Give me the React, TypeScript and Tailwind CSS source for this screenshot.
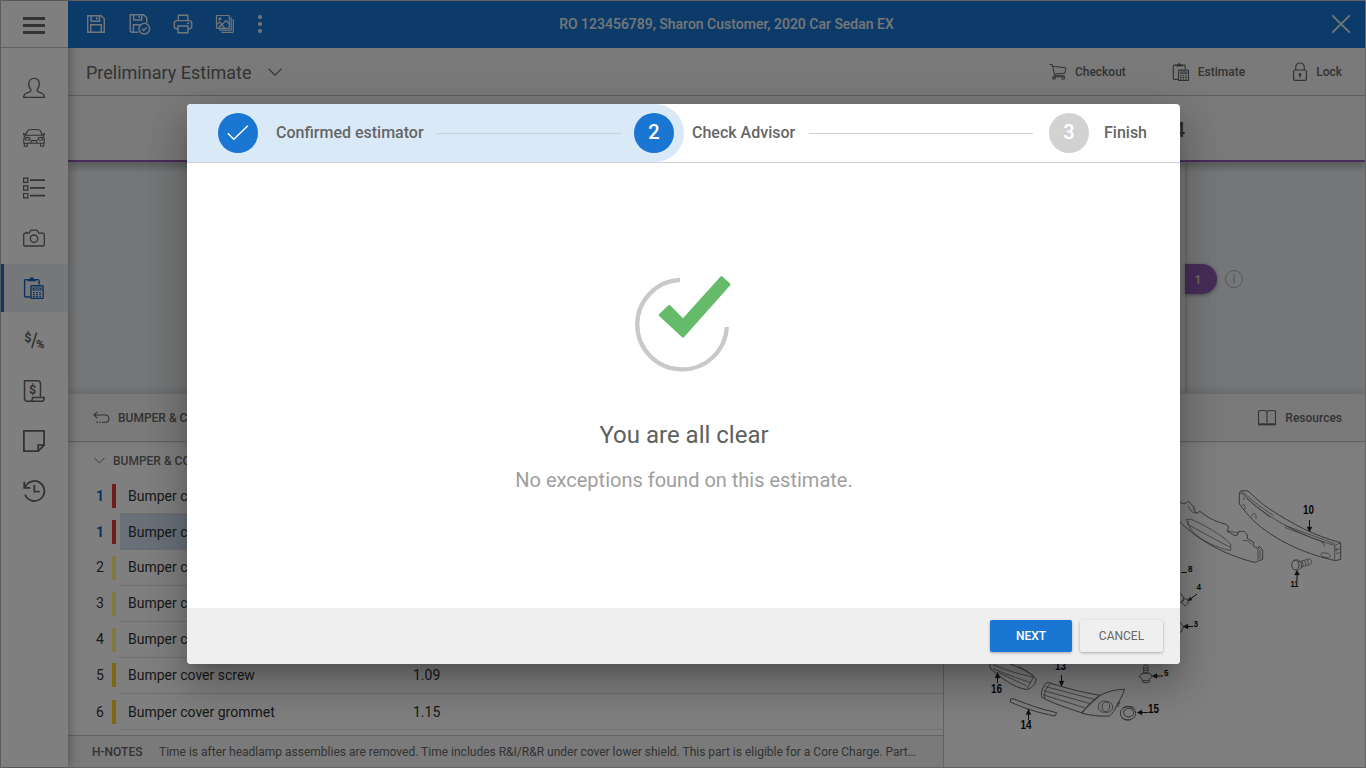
import React from "react";

const navItems = [
  { id: "customer", icon: <UserIcon />, className: "" },
  { id: "vehicle", icon: <CarIcon />, className: "" },
  { id: "lines", icon: <ListIcon />, className: "" },
  { id: "photos", icon: <CameraIcon />, className: "" },
  { id: "estimate", icon: <ClipboardIcon size={22} />, className: "", active: true },
  { id: "rates", icon: <RatesIcon />, className: "mt-[2px]" },
  { id: "invoice", icon: <InvoiceIcon />, className: "mt-px" },
  { id: "notes", icon: <NoteIcon />, className: "" },
  { id: "history", icon: <HistoryIcon />, className: "" },
];

const parts = [
  { num: "1", name: "Bumper cover", bar: "bg-[#e53935]", linked: true },
  { num: "1", name: "Bumper cover", bar: "bg-[#e53935]", linked: true, selected: true },
  { num: "2", name: "Bumper cover", bar: "bg-[#fff08a]", raised: true },
  { num: "3", name: "Bumper cover", bar: "bg-[#fff08a]", raised: true },
  { num: "4", name: "Bumper cover", bar: "bg-[#fff08a]", raised: true },
  { num: "5", name: "Bumper cover screw", bar: "mb-0.5 bg-[#fdd023]", value: "1.09", raised: true },
  { num: "6", name: "Bumper cover grommet", bar: "bg-[#fdd023]", value: "1.15" },
];

function UserIcon() {
  return (
    <svg width="22" height="22" viewBox="0 0 22 22" fill="none" stroke="currentColor" strokeWidth="1.3">
      <path d="M.7 20.3c0-3 .8-3.600 3-4.300 2.800-.9 4.300-1.200 4.300-2.500 0-1-2.300-2.600-2.300-6.500 0-3.600 2-5.600 5.300-5.600s5.300 2 5.300 5.600c0 3.900-2.300 5.500-2.300 6.500 0 1.300 1.500 1.600 4.300 2.500 2.200.7 3 1.300 3 4.300z" />
    </svg>
  );
}

function CarIcon() {
  return (
    <svg width="22" height="18" viewBox="0 0 22 18" fill="none" stroke="currentColor" strokeWidth="1.100">
      <path d="M2.500 6.200 4.700 1.700C5 1.100 5.500.9 6.200.8c3-.3 6.600-.3 9.600 0 .7.1 1.200.3 1.500.9l2.200 4.500M2.500 6.200h17M2.800 5.600.6 4.600v1.300l1.600.7M19.200 5.600l2.200-1v1.300l-1.600.7M2.200 6.600C1.200 7.600.8 9 .8 10.500v3.700h20.400v-3.700c0-1.500-.4-2.900-1.400-3.900M1.300 14.200v3h3v-3M17.700 14.200v3h3v-3M7.500 11.600h7M7.800 13.800l.7-2.200M14.200 13.800l-.7-2.200" />
      <ellipse cx="4.600" cy="9.800" rx="2.300" ry="1.400" />
      <ellipse cx="17.400" cy="9.800" rx="2.300" ry="1.400" />
    </svg>
  );
}

function ListIcon() {
  return (
    <svg width="22" height="22" viewBox="0 0 22 22" fill="none" stroke="currentColor">
      <path d="M.6 1.100h4.300v4.300H.6zM.6 8.800h4.300v4.300H.6zM.6 16.500h4.300v4.300H.6z" strokeWidth="1.200" />
      <path d="M7 3.200h15M7 10.900h15M7 18.600h15" strokeWidth="1.700" />
    </svg>
  );
}

function CameraIcon() {
  return (
    <svg width="22" height="18" viewBox="0 0 22 18" fill="none" stroke="currentColor" strokeWidth="1.300">
      <path d="M2 4.200h4.200l1.200-2.200c.3-.6.7-.9 1.300-.9h4.600c.6 0 1 .3 1.300.9l1.200 2.200H20c.8 0 1.300.5 1.300 1.300v10.200c0 .8-.5 1.300-1.300 1.300H2c-.8 0-1.300-.5-1.300-1.300V5.500c0-.8.5-1.300 1.300-1.300z" />
      <circle cx="11" cy="9.700" r="3.700" />
      <path d="M2.700 3.500h2" />
    </svg>
  );
}

function ClipboardIcon({ size }: { size: number }) {
  return (
    <svg width={size} height={size} viewBox="0 0 22 22" fill="none" stroke="currentColor" strokeWidth="1.400">
      <path d="M7.500 20H2.700C2 20 1.600 19.600 1.600 19V3.600C1.600 3 2 2.600 2.700 2.600H15c.7 0 1.100.4 1.100 1v4" />
      <path d="M4.500 2.200h2.300C7 .8 7.800.2 8.800.2S10.600.8 10.800 2.200h2.300v2H4.500z" fill="currentColor" stroke="none" />
      <path d="M8.800 8.700h10.500c.5 0 .8.3.8.8v11.200c0 .5-.3.800-.8.800H8.800c-.5 0-.8-.3-.8-.8V9.500c0-.5.3-.8.8-.8z" />
      <path d="M10.200 11h7.800v2h-7.800z" strokeWidth="1.200" />
      <path d="M10 15.700h1.800M13.100 15.700h1.800M16.200 15.700H18M10 17.700h1.800M13.100 17.700h1.800M16.200 17.700H18M10 19.700h1.800M13.100 19.700h1.800M16.200 19.700H18" strokeWidth="1.300" />
    </svg>
  );
}

function RatesIcon() {
  return (
    <svg width="22" height="20" viewBox="0 0 22 20" fill="currentColor" stroke="currentColor" strokeWidth=".3">
      <text x="1.500" y="11.500" fontFamily="Roboto, sans-serif" fontSize="12" fontWeight="500">$</text>
      <text x="13.300" y="18" fontFamily="Roboto, sans-serif" fontSize="11" fontWeight="500">%</text>
      <path d="M13.600 2.500 8.800 18" strokeWidth="1.600" />
    </svg>
  );
}

function InvoiceIcon() {
  return (
    <svg width="22" height="22" viewBox="0 0 22 22" fill="none" stroke="currentColor" strokeWidth="1.500">
      <path d="M17.500 16.500V4c0-1.800-1-3.200-3-3.200H1.500V18c0 2 1 3.300 3 3.300h13.800c1.700 0 2.900-1.300 2.900-3.900H9.500c0 2.600-1 3.900-2.900 3.900" />
      <text x="6" y="14" fill="currentColor" stroke="none" fontFamily="Roboto, sans-serif" fontSize="12.500" fontWeight="700">$</text>
    </svg>
  );
}

function NoteIcon() {
  return (
    <svg width="22" height="22" viewBox="0 0 22 22" fill="none" stroke="currentColor" strokeWidth="1.800">
      <path d="M.9.9h20.200v14.300l-5.900 5.900H.9z" />
      <path d="M15.200 21.100v-5.900h5.900" />
    </svg>
  );
}

function HistoryIcon() {
  return (
    <svg width="24" height="22" viewBox="0 0 24 22" fill="none" stroke="currentColor" strokeWidth="1.800">
      <path d="M3.200 7A10 10 0 1 1 3 14.500" />
      <path d="M2.300 1.800v6h6" />
      <path d="M12.300 5v6.600h5.500" />
    </svg>
  );
}

function SaveIcon() {
  return (
    <svg width="20" height="20" viewBox="0 0 20 20" fill="none" stroke="currentColor" strokeWidth="1.400">
      <path d="M1.700 1.700h13.500l3.100 3.100v13.500H1.700z" />
      <path d="M5.200 1.700v5.600h8.300V1.700M10.800 3v2.500M4.700 18.300v-7.500h10.600v7.500" />
    </svg>
  );
}

function SaveCheckIcon() {
  return (
    <svg width="24" height="22" viewBox="0 0 24 22" fill="none" stroke="currentColor" strokeWidth="1.400">
      <path d="M10.500 19.300H3.500l-1.300-1.300V1.800h13.500l3 3v5.500" />
      <path d="M5.700 1.800v5.200h8V1.800M11.200 3v2.300M5.400 19.300v-7.500h6.800" />
      <circle cx="16.300" cy="15.700" r="5.300" />
      <path d="m14 15.700 1.700 1.700 3-3" />
    </svg>
  );
}

function PrintIcon() {
  return (
    <svg width="20" height="20" viewBox="0 0 20 20" fill="none" stroke="currentColor" strokeWidth="1.400">
      <path d="M5.300 6.500V1.300h9.500v5.200M5 14.700H3l-1.700-1.400V8.200L3 6.600h14l1.700 1.600v5.100L17 14.700h-2" />
      <path d="M5 12h10v6.700H5zM14.200 9.300h2" />
    </svg>
  );
}

function GalleryIcon() {
  return (
    <svg width="20" height="20" viewBox="0 0 20 20" fill="none" stroke="currentColor" strokeWidth="1.200">
      <path d="M2.300 1.500h11.200c.5 0 .8.3.8.8v11.200c0 .5-.3.800-.8.800H2.300c-.5 0-.8-.3-.8-.8V2.300c0-.5.300-.8.800-.8z" />
      <path d="m1.500 10.800 3-3 2.800 2.800 3.600-4.300 3.400 3.800M3.500 14l3-3.500 3 3.500M16.200 3.200v12.200c0 .5-.3.800-.8.800H4M18.300 5.200v12.300c0 .5-.3.800-.8.800H6.500" />
      <circle cx="5" cy="4.800" r="1" />
    </svg>
  );
}

function Chevron({ className }: { className?: string }) {
  return (
    <svg className={className} viewBox="0 0 14 8" fill="none" stroke="currentColor" strokeWidth="1.200">
      <path d="m.5.6 6.500 6.600L13.500.6" />
    </svg>
  );
}

function CartIcon() {
  return (
    <svg width="18" height="18" viewBox="0 0 18 18" fill="none" stroke="currentColor" strokeWidth="1">
      <path d="M.5 1.500h2.700l2.500 11.200h9.800M3.700 3.300 17 4.800l-1.200 5.400-10.500.9M4.200 13.800h11.500" />
      <circle cx="5" cy="15" r="1.400" />
      <circle cx="14.300" cy="15" r="1.400" />
    </svg>
  );
}

function LockIcon() {
  return (
    <svg width="16" height="20" viewBox="0 0 16 20" fill="none" stroke="currentColor" strokeWidth="1.200">
      <path d="M3.700 8V5.500C3.700 2.500 5.500 1 8 1s4.300 1.500 4.300 4.500V8" />
      <rect x="1.600" y="8" width="12.800" height="10.400" rx="1.300" />
      <path d="M8 12.500v3" strokeWidth="1.500" />
      <circle cx="8" cy="12.500" r="1.400" fill="currentColor" stroke="none" />
    </svg>
  );
}

function BookIcon() {
  return (
    <svg width="20" height="18" viewBox="0 0 20 18" fill="none" stroke="currentColor" strokeWidth="1.100">
      <path d="M10 2.500C8.500 1.300 3.500 1.300 1.500 2v13.300c2-.6 7-.6 8.500.5 1.500-1.100 6.500-1.100 8.500-.5V2c-2-.7-7-.7-8.500.5zM10 2.500v14" />
      <path d="M1.500 15.600h17" strokeWidth="1.500" />
    </svg>
  );
}

function BackIcon() {
  return (
    <svg width="17" height="13" viewBox="0 0 17 13" fill="none" stroke="currentColor" strokeWidth="1.100">
      <path d="M4.300.8.900 4l3.400 3.200M.9 4h10.800c2.700 0 4.300 1.600 4.300 3.700 0 2.200-1.600 3.600-3.500 3.600h-1.500" />
      <path d="M3 11.300h8" strokeDasharray="2 1" />
    </svg>
  );
}

// Exploded view of the bumper assembly
function PartsDiagram() {
  return (
    <svg width="421" height="325" viewBox="944 442 421 325" fill="none" stroke="#5c5c5c">
      <g transform="translate(1170 470) scale(.33333)" strokeWidth="2.600" strokeLinejoin="round">
        <path d="M208 68l8-6 18 1c20 18 40 38 66 55 70 45 130 78 212 100v50l-16 4c-100-22-200-70-260-135l-28-35z" />
        <path d="M208 68l14 6c30 35 72 62 110 84 60 34 110 54 162 68l18-8M494 226v46M212 62l18 14c20 18 50 42 80 60M344 166l150 55M344 172l120 46M230 86l70 56" strokeWidth="2" />
        <path d="M498 240l14-4M498 250l14-2M498 232v12M216 106c6-6 12 2 8 12M246 140c-2-10 8-14 12-4v10" strokeWidth="2" />
        <path d="M456 248l18 2 8 8-6 6-18-4-6-6zM456 216l10 14M224 80l-4 10" strokeWidth="2" />
        <path d="M20 97H30L42 102 56 94 66 106 72 110V120L80 130 90 124C108 140 138 156 166 162L176 170 172 184 190 194 200 198 206 184 222 184 232 194V206L250 216V228L264 236 268 228 278 240V268L268 272 254 277C190 262 90 222 20 145" />
        <path d="M48 148H64C100 164 150 190 182 222V242C138 232 90 212 64 180zM54 152V164L180 232M54 108 66 126 80 130M172 184H184L206 190M218 212H232L244 222M264 236V270M270 238V268" strokeWidth="2" />
        <ellipse cx="376" cy="285" rx="11" ry="15" />
        <path d="M370 273l12-4 12 8 1 16-11 7M386 276l30-9c10-1 11 16 2 18l-26 6M396 274l4 14M404 271l4 15M412 269l4 15" strokeWidth="2" />
        <path d="M10 376l22-6 10 14-8 14-22 4M36 398l8-12 10 2v12l-8 8zM10 462l22-4 8 12-6 16-20 2" />
      </g>
      <g transform="translate(940 600) scale(.33333)" strokeWidth="2.800" strokeLinejoin="round">
        <path d="M150 192V204C182 234 222 262 256 268 276 270 290 246 288 236 272 216 232 200 206 190" />
        <path d="M160 194C198 212 240 222 280 232M160 206C190 220 230 234 272 248M172 216 260 258M236 200C256 210 274 220 280 232L262 264" strokeWidth="2.200" />
        <path d="M212 297l8-1c44 18 84 32 130 42l-5 10c-52-10-94-24-134-42z" />
        <path d="M322 247c50 16 104 30 158 39l-56 52c-42-14-86-28-118-46-6-12 4-38 16-45z" />
        <path d="M318 260l144 38M312 272l136 38M308 284l128 40M332 250c-14 12-20 28-18 44" strokeWidth="2.200" />
        <path d="M426 340C442 316 462 296 480 286 504 274 526 268 554 268 548 286 540 300 532 312 524 330 518 342 508 348 482 350 452 346 426 340zM532 309l8-2-8 14" />
        <circle cx="492" cy="320" r="17" strokeWidth="2.200" />
        <circle cx="502" cy="321" r="16" strokeWidth="2.200" />
        <ellipse cx="564" cy="340" rx="23" ry="20" />
        <ellipse cx="566" cy="338" rx="15" ry="13" />
        <path d="M548 324l8-5 20 1 8 6M546 354l10 6h14" strokeWidth="2.200" />
        <path d="M611 198l6-4 7 4v22h-13zM611 204h13M611 211h13" strokeWidth="2.200" />
        <path d="M604 222c8-5 20-5 28 0l4 8-12 12h-14l-12-12zM606 240l2 6c6 3 14 3 20 0l2-6" />
      </g>
      <g stroke="#222" strokeWidth="1">
        <path d="M1309.500 520v8M1297 581v-8M1181 572.500h6M1197 594l-6 4.500M1193 626.500h-7M997.500 683v-7M1061.500 675v8M1028.500 720v-7M1163 676h-7M1148 712.500h-7" />
        <path d="M1307 527h5l-2.500 5zM1294.500 575h5l-2.500-5zM1188 601l2-4 2 3zM1188 624v5l-5-2.500zM995 678h5l-2.500-5.500zM1059 681h5l-2.500 5.500zM1026 714.500h5l-2.500-5.500zM1157 673.500v5l-5-2.500zM1142 710v5l-5-2.500z" fill="#222" strokeWidth=".3" />
      </g>
      <g fill="#111" stroke="none" fontFamily="'Liberation Sans', sans-serif" fontWeight="700">
        <text x="1303" y="514" fontSize="12.500" textLength="11" lengthAdjust="spacingAndGlyphs">10</text>
        <text x="1290.500" y="587" fontSize="9" textLength="8" lengthAdjust="spacingAndGlyphs">11</text>
        <text x="1188" y="572" fontSize="9" textLength="4.500" lengthAdjust="spacingAndGlyphs">8</text>
        <text x="1196.500" y="590" fontSize="9" textLength="4.500" lengthAdjust="spacingAndGlyphs">4</text>
        <text x="1193.500" y="626.500" fontSize="9" textLength="4.500" lengthAdjust="spacingAndGlyphs">3</text>
        <text x="991" y="693" fontSize="12.500" textLength="11" lengthAdjust="spacingAndGlyphs">16</text>
        <text x="1055" y="670" fontSize="12.500" textLength="11" lengthAdjust="spacingAndGlyphs">13</text>
        <text x="1020.500" y="729" fontSize="12.500" textLength="11" lengthAdjust="spacingAndGlyphs">14</text>
        <text x="1148" y="713" fontSize="12.500" textLength="11" lengthAdjust="spacingAndGlyphs">15</text>
        <text x="1164" y="676" fontSize="9" textLength="4.500" lengthAdjust="spacingAndGlyphs">5</text>
      </g>
    </svg>
  );
}

function Sidebar() {
  return (
    <aside className="relative z-10 w-[67px] shrink-0 bg-white text-[#666] shadow-[2px_0_10px_rgba(0,0,0,0.3)]">
      <div className="flex h-[47px] flex-col items-center justify-center gap-[4px] border-b border-[#c4c4c4] pt-0.5 pr-px">
        <span className="h-[3px] w-[22px] bg-[#666]" />
        <span className="h-[3px] w-[22px] bg-[#666]" />
        <span className="h-[3px] w-[22px] bg-[#666]" />
      </div>
      <nav className="flex flex-col gap-0.5 pt-4">
        {navItems.map((item) => (
          <div key={item.id} className={item.className}>
            <a
              className={
                item.active
                  ? "flex h-12 items-center justify-center border-l-3 border-[#1976d2] bg-[#eceff1] pr-1 text-[#1565c0]"
                  : "flex h-12 items-center justify-center pr-px"
              }
            >
              {item.icon}
            </a>
          </div>
        ))}
      </nav>
    </aside>
  );
}

function TopBar() {
  return (
    <header className="relative z-10 flex h-[47px] items-center bg-[#1976d2] pr-[14px] pb-px pl-[18px] text-[#e8eef5]">
      <div className="flex w-[190px] items-center">
        <SaveIcon />
        <span className="ml-[22px]"><SaveCheckIcon /></span>
        <span className="ml-[21px]"><PrintIcon /></span>
        <span className="ml-[22px]"><GalleryIcon /></span>
        <span className="ml-[23px] flex flex-col gap-[3px]">
          <i className="size-1 rounded-full bg-[#e8eef5]" />
          <i className="size-1 rounded-full bg-[#e8eef5]" />
          <i className="size-1 rounded-full bg-[#e8eef5]" />
        </span>
      </div>
      <h1 className="flex-1 pr-[154px] text-center text-sm font-medium whitespace-nowrap">
        RO 123456789, Sharon Customer, 2020 Car Sedan EX
      </h1>
      <svg width="20" height="20" viewBox="0 0 20 20" fill="none" stroke="currentColor" strokeWidth="1.800">
        <path d="m1.300 1.300 17.400 17.400M18.700 1.300 1.300 18.700" />
      </svg>
    </header>
  );
}

function SubBar() {
  return (
    <div className="flex h-12 items-center border-b border-[#c4c4c4] bg-[#f5f5f5] pr-[23px] pl-[18px] text-xs font-medium text-[#666]">
      <h2 className="w-[165px] pt-0.5 text-lg font-normal whitespace-nowrap">Preliminary Estimate</h2>
      <Chevron className="ml-[17px] h-2 w-[14px]" />
      <div className="ml-auto flex items-center">
        <CartIcon />
        <span className="ml-2 pt-px">Checkout</span>
        <span className="ml-[46px]"><ClipboardIcon size={18} /></span>
        <span className="ml-2">Estimate</span>
        <span className="ml-[47px]"><LockIcon /></span>
        <span className="ml-2">Lock</span>
      </div>
    </div>
  );
}

function PartsTable() {
  return (
    <section className="flex w-[876px] shrink-0 flex-col border-r border-[#c4c4c4] bg-white">
      <div className="h-[294px]">
        <div className="flex h-9 items-center pl-[26px] text-xs font-medium text-[#6b6b6b]">
          <Chevron className="mr-2 h-[7px] w-[11px]" />
          <span className="pt-0.5">BUMPER &amp; COVER</span>
        </div>
        {parts.map((part, i) => (
          <div key={i} className="flex h-9 items-center text-sm text-[#333]">
            <span
              className={`w-11 pl-[28px] ${part.linked ? "font-bold text-[#1565c0]" : ""} ${part.raised ? "pb-0.5" : ""}`}
            >
              {part.num}
            </span>
            <span className={`mr-1 h-6 w-1 ${part.bar}`} />
            <span
              className={
                part.selected
                  ? "flex h-full flex-1 items-center border-y border-[#d5dde8] bg-[#d2e1f5] pl-2"
                  : "flex h-full flex-1 items-center border-b border-[#e0e0e0] pl-2"
              }
            >
              <span className={part.raised ? "w-[285px] pb-px" : "w-[285px]"}>{part.name}</span>
              <span className={part.raised ? "pb-px" : ""}>{part.value}</span>
            </span>
          </div>
        ))}
      </div>
      <div className="flex h-8 items-center border-t border-[#c4c4c4] bg-[#f5f5f5] pl-6 text-xs whitespace-nowrap text-[#666]">
        <span className="w-[67px] font-medium">H-NOTES</span>
        <span>
          Time is after headlamp assemblies are removed. Time includes R&amp;I/R&amp;R under cover lower shield. This part is eligible for a Core Charge. Part…
        </span>
      </div>
    </section>
  );
}

function ConfirmDialog() {
  return (
    <div className="absolute inset-0 z-20 bg-black/50 pt-[104px] pl-[187px]">
      <div
        role="dialog"
        className="flex h-[560px] w-[993px] flex-col overflow-hidden rounded bg-white shadow-[0_11px_15px_-7px_rgba(0,0,0,0.2),0_24px_38px_3px_rgba(0,0,0,0.14),0_9px_46px_8px_rgba(0,0,0,0.12)]"
      >
        <div className="flex h-[59px] border-b border-[#d0d0d0] font-medium text-[#666]">
          <div className="flex w-[497px] items-center rounded-r-full bg-[#dae9f8] pl-[31px]">
            <span className="flex size-10 items-center justify-center rounded-full bg-[#1976d2]">
              <svg width="22" height="16" viewBox="0 0 22 16" fill="none" stroke="white" strokeWidth="1.500">
                <path d="m.8 8.200 6 6L20.800.8" />
              </svg>
            </span>
            <span className="ml-[18px] w-[148px] whitespace-nowrap">Confirmed estimator</span>
            <span className="ml-3 h-px w-[186px] bg-[#cfd2d6]" />
            <span className="ml-3 flex size-10 items-center justify-center rounded-full bg-[#1976d2] pb-[3px] text-xl text-white">
              2
            </span>
          </div>
          <div className="flex flex-1 items-center pl-2">
            <span className="w-[104px] whitespace-nowrap">Check Advisor</span>
            <span className="ml-[13px] h-px w-[224px] bg-[#d0d0d0]" />
            <span className="ml-4 flex size-10 items-center justify-center rounded-full bg-[#d2d2d2] pb-[3px] text-xl text-white">
              3
            </span>
            <span className="ml-[15px]">Finish</span>
          </div>
        </div>
        <div className="flex flex-1 flex-col items-center pt-[112px] pl-px">
          <svg width="100" height="98" viewBox="0 0 100 98" fill="none">
            <path d="M46 4.900A44.800 44.800 0 1 0 92.800 52" stroke="#c9c9c9" strokeWidth="4.300" />
            <path
              d="M35.300 31.100 49 45.200 87.500 2.400 95.300 9.400 49 61.300 26 40z"
              fill="#66bb6a"
              stroke="#66bb6a"
              strokeWidth="2.500"
              strokeLinejoin="round"
            />
          </svg>
          <h3 className="mt-[46px] text-2xl leading-8 text-[#5f5f5f]">You are all clear</h3>
          <p className="mt-[15px] text-xl leading-7 text-[#9e9e9e]">
            No exceptions found on this estimate.
          </p>
        </div>
        <div className="flex h-14 items-center justify-end gap-2 bg-[#efefef] pr-[17px] text-xs">
          <button className="h-8 w-[82px] rounded-xs bg-[#1976d2] font-medium text-white shadow-[0_1px_3px_rgba(0,0,0,0.3)]">
            NEXT
          </button>
          <button className="h-8 w-[83px] rounded-xs bg-[#efefef] text-[#666] shadow-[0_1px_3px_rgba(0,0,0,0.3)]">
            CANCEL
          </button>
        </div>
      </div>
    </div>
  );
}

export default function App() {
  return (
    <div className="relative h-[768px] w-[1366px] overflow-hidden font-[Roboto,sans-serif]">
      <div className="flex h-full border border-[#c8c8c8] bg-white">
        <Sidebar />
        <main className="flex flex-1 flex-col overflow-hidden">
          <div className="relative z-10">
            <TopBar />
          </div>
          <SubBar />
          <div className="relative flex h-[66px] justify-end border-b-2 border-[#8e5bb0] bg-[#f5f5f5] pt-5 pr-[180px] shadow-[0_5px_8px_rgba(0,0,0,0.25)]">
            <span className="text-xl leading-7 font-medium text-[#555]">4</span>
          </div>
          <div className="flex h-[232px] bg-[#eceff1]">
            <div className="ml-[140px] w-[977px] bg-[#f5f5f5] shadow-[0_0_4px_rgba(0,0,0,0.3)]" />
            <div className="flex items-center pt-0.5">
              <span className="flex h-[30px] w-8 items-center justify-center rounded-r-full bg-[#8e5bb0] pt-px pr-1.5 text-xs font-medium text-[#ddd] shadow-[0_1px_4px_rgba(0,0,0,0.4)]">
                1
              </span>
              <span className="ml-2 flex size-[18px] items-center justify-center rounded-full border border-[#b0b0b0] text-xs text-[#b0b0b0]">
                i
              </span>
            </div>
          </div>
          <div className="relative flex h-12 items-center border-b border-[#c4c4c4] bg-[#f5f5f5] pr-[23px] pl-[25px] text-xs font-medium text-[#666] shadow-[0_-2px_10px_rgba(0,0,0,0.15)]">
            <BackIcon />
            <span className="ml-2">BUMPER &amp; COVER</span>
            <span className="ml-auto mr-2"><BookIcon /></span>
            <span>Resources</span>
          </div>
          <div className="flex h-[325px]">
            <PartsTable />
            <PartsDiagram />
          </div>
        </main>
      </div>
      <ConfirmDialog />
    </div>
  );
}
